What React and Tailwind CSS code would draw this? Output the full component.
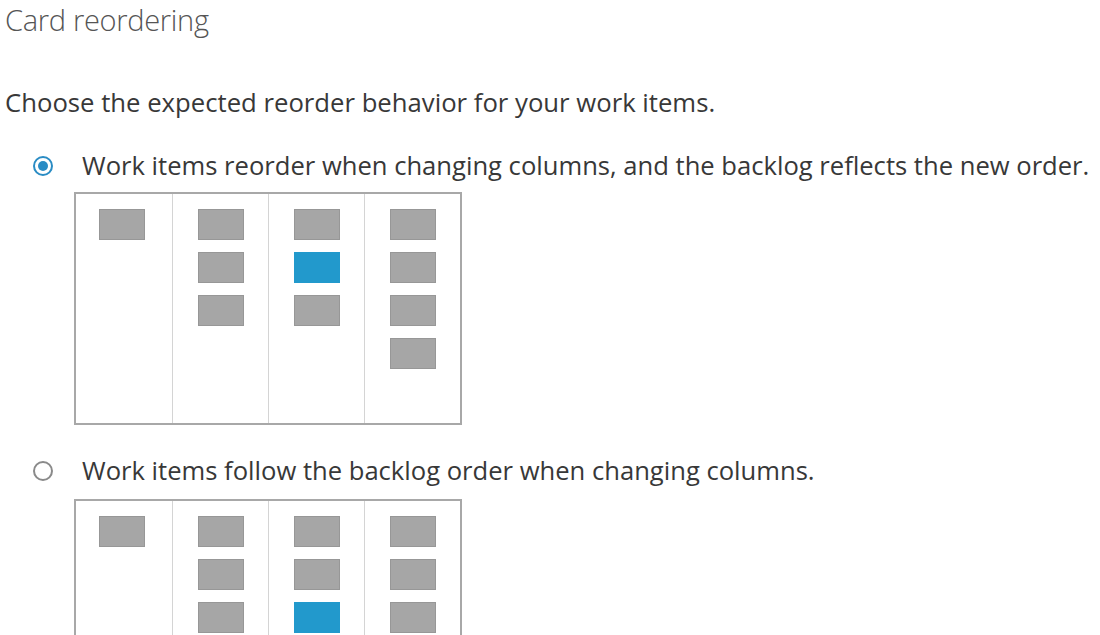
import React from "react";

const boardA = [
  ["g"],
  ["g", "g", "g"],
  ["g", "b", "g"],
  ["g", "g", "g", "g"],
];

const boardB = [
  ["g"],
  ["g", "g", "g"],
  ["g", "g", "b"],
  ["g", "g", "g", "g"],
];

function Board({ cols }) {
  return (
    <div className="ml-[74px] w-[388px] h-[233px] grid grid-cols-4 border-2 border-[#a8a8a8]">
      {cols.map((cards, i) => (
        <div
          key={i}
          className={`flex flex-col items-center gap-[12px] pt-[15px] ${
            i > 0 ? "border-l border-[#d4d4d4]" : "pr-[4px]"
          }`}
        >
          {cards.map((c, j) => (
            <div
              key={j}
              className={`w-[46px] h-[31px] ${
                c === "b"
                  ? "bg-[#2299cc]"
                  : "bg-[#a6a6a6] border border-[#979797]"
              }`}
            />
          ))}
        </div>
      ))}
    </div>
  );
}

function Radio({ checked, label }) {
  return (
    <div className="flex items-center h-[36px] pl-[33px]">
      <span
        className={`w-[20px] h-[20px] rounded-full border-2 flex items-center justify-center ${
          checked ? "border-[#2a8cc4]" : "border-[#8a8a8a]"
        }`}
      >
        {checked && <span className="w-[10px] h-[10px] rounded-full bg-[#2a8cc4]" />}
      </span>
      <span className="ml-[29px] text-[25.6px] text-[#383838] leading-[36px]">{label}</span>
    </div>
  );
}

export default function App() {
  return (
    <div
      className="w-[1100px] h-[635px] overflow-hidden bg-white"
      style={{ fontFamily: '"Open Sans", "Noto Sans", sans-serif' }}
    >
      <div className="pl-[5px] text-[29px] font-light text-[#555] leading-[40px] tracking-[-0.3px]">
        Card reordering
      </div>
      <div className="pl-[5px] mt-[45px] text-[25.7px] text-[#383838] leading-[36px]">
        Choose the expected reorder behavior for your work items.
      </div>
      <div className="mt-[27px]">
        <Radio
          checked
          label="Work items reorder when changing columns, and the backlog reflects the new order."
        />
      </div>
      <div className="mt-[8px]">
        <Board cols={boardA} />
      </div>
      <div className="mt-[28px]">
        <Radio label="Work items follow the backlog order when changing columns." />
      </div>
      <div className="mt-[10px]">
        <Board cols={boardB} />
      </div>
    </div>
  );
}
